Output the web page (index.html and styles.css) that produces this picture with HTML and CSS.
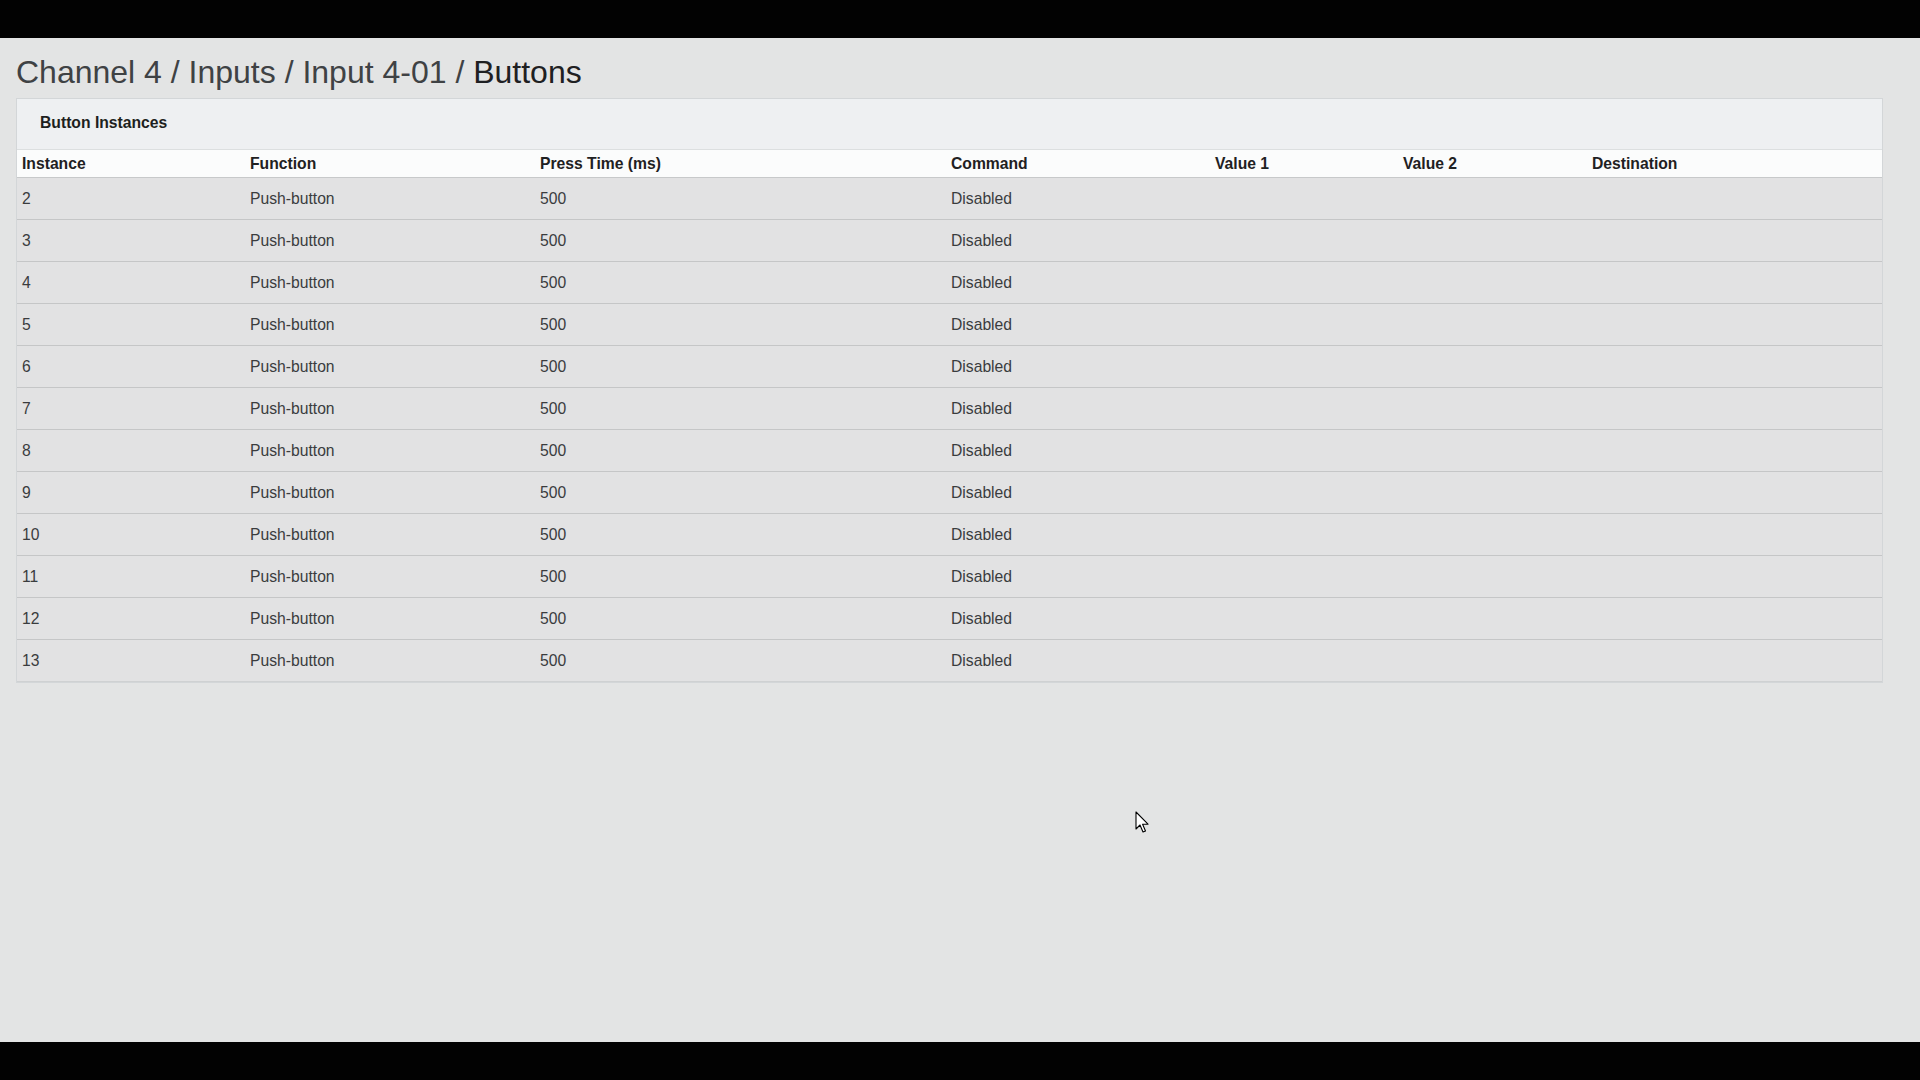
FILE: index.html
```html
<!DOCTYPE html>
<html lang="en">
<head>
<meta charset="utf-8">
<title>Buttons</title>
<link rel="stylesheet" href="styles.css">
</head>
<body>
<div class="screen">
  <div class="blackbar"></div>
  <main class="main">
    <h1 class="breadcrumb"><span class="crumb">Channel 4 / Inputs / Input 4-01 / </span><span class="crumb-current">Buttons</span></h1>
    <section class="panel">
      <div class="panel-heading">Button Instances</div>
      <table class="grid">
        <colgroup>
          <col class="c-inst"><col class="c-func"><col class="c-press"><col class="c-cmd"><col class="c-v1"><col class="c-v2"><col class="c-dest">
        </colgroup>
        <thead>
          <tr><th>Instance</th><th>Function</th><th>Press Time (ms)</th><th>Command</th><th>Value 1</th><th>Value 2</th><th>Destination</th></tr>
        </thead>
        <tbody>
          <tr><td>2</td><td>Push-button</td><td>500</td><td>Disabled</td><td></td><td></td><td></td></tr>
          <tr><td>3</td><td>Push-button</td><td>500</td><td>Disabled</td><td></td><td></td><td></td></tr>
          <tr><td>4</td><td>Push-button</td><td>500</td><td>Disabled</td><td></td><td></td><td></td></tr>
          <tr><td>5</td><td>Push-button</td><td>500</td><td>Disabled</td><td></td><td></td><td></td></tr>
          <tr><td>6</td><td>Push-button</td><td>500</td><td>Disabled</td><td></td><td></td><td></td></tr>
          <tr><td>7</td><td>Push-button</td><td>500</td><td>Disabled</td><td></td><td></td><td></td></tr>
          <tr><td>8</td><td>Push-button</td><td>500</td><td>Disabled</td><td></td><td></td><td></td></tr>
          <tr><td>9</td><td>Push-button</td><td>500</td><td>Disabled</td><td></td><td></td><td></td></tr>
          <tr><td>10</td><td>Push-button</td><td>500</td><td>Disabled</td><td></td><td></td><td></td></tr>
          <tr><td>11</td><td>Push-button</td><td>500</td><td>Disabled</td><td></td><td></td><td></td></tr>
          <tr><td>12</td><td>Push-button</td><td>500</td><td>Disabled</td><td></td><td></td><td></td></tr>
          <tr><td>13</td><td>Push-button</td><td>500</td><td>Disabled</td><td></td><td></td><td></td></tr>
        </tbody>
      </table>
    </section>
    <svg class="cursor" width="16" height="24" viewBox="0 0 16 24" aria-hidden="true">
      <path d="M1 1 L1 18 L5 14 L8 21 L10.5 20 L7.6 13.2 L13 13.2 Z" fill="#ffffff" stroke="#000000" stroke-width="1.1" stroke-linejoin="round"/>
    </svg>
  </main>
  <div class="blackbar"></div>
</div>
</body>
</html>
```

FILE: styles.css
```css
* { box-sizing: border-box; }

html, body {
  margin: 0;
  padding: 0;
  background: #000;
}

.screen {
  width: 1920px;
  height: 1080px;
  display: flex;
  flex-direction: column;
  overflow: hidden;
  font-family: "Liberation Sans", Arial, sans-serif;
}

.blackbar {
  height: 38px;
  flex: 0 0 38px;
  background: #020202;
}

.main {
  position: relative;
  flex: 1 1 auto;
  background: #e3e4e4;
  padding: 16px 37px 0 16px;
}

.breadcrumb {
  margin: 0 0 8px 0;
  font-size: 32px;
  line-height: 36px;
  font-weight: normal;
  color: #3f4244;
}

.crumb-current {
  color: #1e2022;
}

.panel {
  border: 1px solid #d3d6d8;
  background: #e2e2e3;
}

.panel-heading {
  background: #eef0f2;
  padding: 15px 23px 17px;
  line-height: 18px;
  font-size: 15.7px;
  font-weight: bold;
  color: #1d1f20;
  border-bottom: 1px solid #dcdfe0;
}

.grid {
  width: 100%;
  border-collapse: separate;
  border-spacing: 0;
  table-layout: fixed;
  font-size: 15.7px;
}

.c-inst { width: 228px; }
.c-func { width: 290px; }
.c-press { width: 411px; }
.c-cmd { width: 264px; }
.c-v1 { width: 188px; }
.c-v2 { width: 189px; }
.c-dest { width: auto; }

.grid th {
  background: #fbfcfc;
  text-align: left;
  font-weight: bold;
  color: #1f2122;
  padding: 0 5px;
  line-height: 27px;
  border-bottom: 1px solid #c7c9ca;
}

.grid td {
  padding: 0 5px;
  line-height: 41px;
  color: #3a3c3e;
  border-bottom: 1px solid #c5c6c7;
  white-space: nowrap;
}

.grid tbody tr:last-child td {
  border-bottom: 1px solid #cfd1d2;
}

.cursor {
  position: absolute;
  left: 1135px;
  top: 773px;
}
```
